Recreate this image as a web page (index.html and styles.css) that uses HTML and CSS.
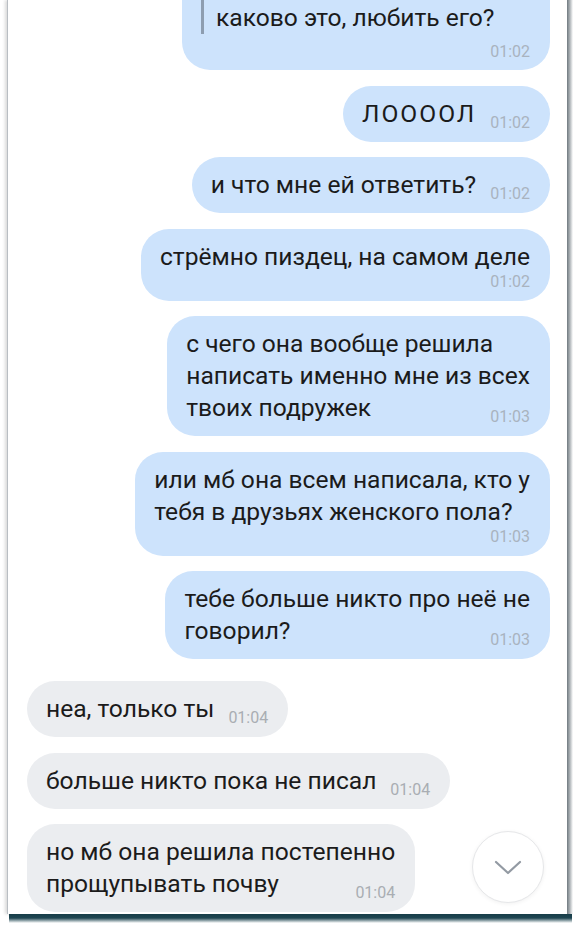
FILE: index.html
```html
<!DOCTYPE html>
<html lang="ru">
<head>
    <meta charset="UTF-8">
    <meta name="viewport" content="width=device-width, initial-scale=1.0">
    <title>Диалог</title>
    <link rel="stylesheet" href="styles.css">
</head>
<body>
    <div class="screen">
        <div class="history">
            <div class="bubble out fwd">
                <div class="quote">каково это, любить его?</div>
                <span class="time below">01:02</span>
            </div>
            <div class="bubble out"><span class="loud">ЛООООЛ</span><span class="time">01:02</span></div>
            <div class="bubble out">и что мне ей ответить?<span class="time">01:02</span></div>
            <div class="bubble out">стрёмно пиздец, на самом деле<span class="time below">01:02</span></div>
            <div class="bubble out">с чего она вообще решила<br>написать именно мне из всех<br>твоих подружек<span class="time">01:03</span></div>
            <div class="bubble out">или мб она всем написала, кто у<br>тебя в друзьях женского пола?<span class="time below">01:03</span></div>
            <div class="bubble out">тебе больше никто про неё не<br>говорил?<span class="time">01:03</span></div>

            <div class="bubble in first">неа, только ты<span class="time">01:04</span></div>
            <div class="bubble in">больше никто пока не писал<span class="time">01:04</span></div>
            <div class="bubble in">но мб она решила постепенно<br>прощупывать почву<span class="time">01:04</span></div>
        </div>

        <!-- scroll to bottom button -->
        <div class="scroll-down">
            <svg width="28" height="16" viewBox="0 0 28 16">
                <path d="M2 2 L14 13 L26 2" fill="none" stroke="#939aa3" stroke-width="2.2" stroke-linecap="round" stroke-linejoin="round"/>
            </svg>
        </div>
    </div>
</body>
</html>
```

FILE: styles.css
```css
html, body {
    margin: 0;
    background: #fff;
}
body {
    min-height: 934px;
    font-family: Roboto, "Noto Sans", Arial, sans-serif;
}
.screen {
    position: relative;
    margin-left: 7px;
    width: 559px;
    height: 914px;
    background: #fff;
    border-left: 1px solid #b9bec3;
    box-shadow: -2px 0 3px rgba(0, 0, 0, 0.15);
}
/* dark edge along the bottom of the photo */
.screen::after {
    content: "";
    position: absolute;
    left: 1px;
    right: -5px;
    top: 100%;
    height: 9px;
    background: linear-gradient(#173d48 0%, #1f4652 45%, rgba(40, 70, 80, 0) 100%);
}
/* grey edge on the right */
.screen::before {
    content: "";
    position: absolute;
    top: 0;
    bottom: 0;
    left: 100%;
    width: 6px;
    background: linear-gradient(90deg, #6f797f 0%, #a9afb3 45%, rgba(255, 255, 255, 0) 100%);
}
.history {
    height: 912px;
    padding: 0 17px 2px 19px;
    display: flex;
    flex-direction: column;
    justify-content: flex-end;
    overflow: hidden;
}
.bubble {
    padding: 12px 20px 12px 19px;
    border-radius: 28px;
    font-size: 24.6px;
    line-height: 32px;
    color: #1b1b1b;
    margin-top: 15.5px;
    flex-shrink: 0;
}
.bubble.out {
    align-self: flex-end;
    background: #cde3fc;
}
.bubble.in {
    align-self: flex-start;
    background: #ebedf0;
}
.bubble.in.first {
    margin-top: 22px;
}
.bubble.fwd {
    width: 368px;
    box-sizing: border-box;
    padding: 0 20px 11px 19px;
    border-radius: 0 0 28px 28px;
}
.quote {
    border-left: 3px solid #8d9db0;
    padding: 40px 0 0 12px;
    margin-top: 3px;
}
.loud {
    letter-spacing: 2px;
}
.time {
    float: right;
    height: 32px;
    margin-left: 14px;
    display: flex;
    align-items: flex-end;
    font-size: 16px;
    line-height: 14px;
    color: #a9b3bf;
}
.bubble.in .time {
    color: #a9adb3;
}
.time.below {
    float: none;
    height: 18px;
    line-height: 18px;
    margin-left: 0;
    display: block;
    text-align: right;
    margin-bottom: -2px;
}
.bubble.fwd .time.below {
    margin-top: 9px;
}
.scroll-down {
    position: absolute;
    left: 464px;
    bottom: 11px;
    width: 72px;
    height: 72px;
    box-sizing: border-box;
    border-radius: 50%;
    background: #fff;
    border: 1px solid #e6e7e9;
    box-shadow: 0 1px 4px rgba(0, 0, 0, 0.06);
    display: flex;
    align-items: center;
    justify-content: center;
}
.scroll-down svg {
    margin-top: 2px;
}
```
